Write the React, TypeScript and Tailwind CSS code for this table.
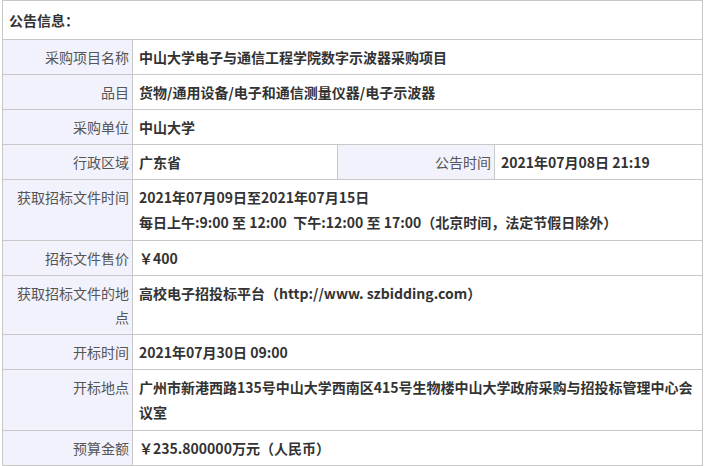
const font = {
  fontFamily: '"Microsoft YaHei", "Noto Sans CJK SC", "Noto Sans", sans-serif',
};

const labelCls =
  'border border-[#c8c8c8] bg-[#f2f2fc] text-right align-top text-[14px] leading-[24px] text-[#555] font-normal py-[5px] pl-1 pr-[3px]';
const valueCls =
  'border border-[#c8c8c8] bg-white text-left align-top text-[14px] leading-[24px] text-[#333] font-bold py-[5px] pl-[6px] pr-[6px]';
const twoLineCls =
  'border border-[#c8c8c8] bg-white text-left align-top text-[14px] leading-[25px] text-[#333] font-bold py-[5px] pl-[6px] pr-[6px]';

export default function App() {
  return (
    <div className="w-[705px] h-[466px] bg-white overflow-hidden" style={font}>
      <table className="ml-[2px] w-[700px] border-collapse table-fixed">
        <colgroup>
          <col className="w-[130px]" />
          <col className="w-[205px]" />
          <col className="w-[157px]" />
          <col className="w-[208px]" />
        </colgroup>
        <tbody>
          <tr>
            <td
              colSpan={4}
              className="border border-[#c8c8c8] text-[14px] leading-[24px] font-bold text-[#333] py-[7px] pl-[6px]"
            >
              公告信息：
            </td>
          </tr>
          <tr>
            <th className={labelCls}>采购项目名称</th>
            <td colSpan={3} className={valueCls}>
              中山大学电子与通信工程学院数字示波器采购项目
            </td>
          </tr>
          <tr>
            <th className={labelCls}>品目</th>
            <td colSpan={3} className={valueCls}>
              货物/通用设备/电子和通信测量仪器/电子示波器
            </td>
          </tr>
          <tr>
            <th className={labelCls}>采购单位</th>
            <td colSpan={3} className={valueCls}>
              中山大学
            </td>
          </tr>
          <tr>
            <th className={labelCls}>行政区域</th>
            <td className={valueCls}>广东省</td>
            <th className={labelCls}>公告时间</th>
            <td className={valueCls}>2021年07月08日 21:19</td>
          </tr>
          <tr>
            <th className={labelCls}>获取招标文件时间</th>
            <td colSpan={3} className={twoLineCls}>
              2021年07月09日至2021年07月15日
              <br />
              每日上午:9:00 至 12:00&nbsp;&nbsp;下午:12:00 至 17:00（北京时间，法定节假日除外）
            </td>
          </tr>
          <tr>
            <th className={labelCls}>招标文件售价</th>
            <td colSpan={3} className={valueCls}>
              ￥400
            </td>
          </tr>
          <tr>
            <th className={labelCls}>获取招标文件的地点</th>
            <td colSpan={3} className={valueCls}>
              高校电子招投标平台（http://www. szbidding.com）
            </td>
          </tr>
          <tr>
            <th className={labelCls}>开标时间</th>
            <td colSpan={3} className={valueCls}>
              2021年07月30日 09:00
            </td>
          </tr>
          <tr>
            <th className={labelCls}>开标地点</th>
            <td colSpan={3} className={twoLineCls}>
              广州市新港西路135号中山大学西南区415号生物楼中山大学政府采购与招投标管理中心会议室
            </td>
          </tr>
          <tr>
            <th className={labelCls}>预算金额</th>
            <td colSpan={3} className={valueCls}>
              ￥235.800000万元（人民币）
            </td>
          </tr>
          <tr>
            <th className={labelCls}></th>
            <td colSpan={3} className={valueCls}>
              &nbsp;
            </td>
          </tr>
        </tbody>
      </table>
    </div>
  );
}
